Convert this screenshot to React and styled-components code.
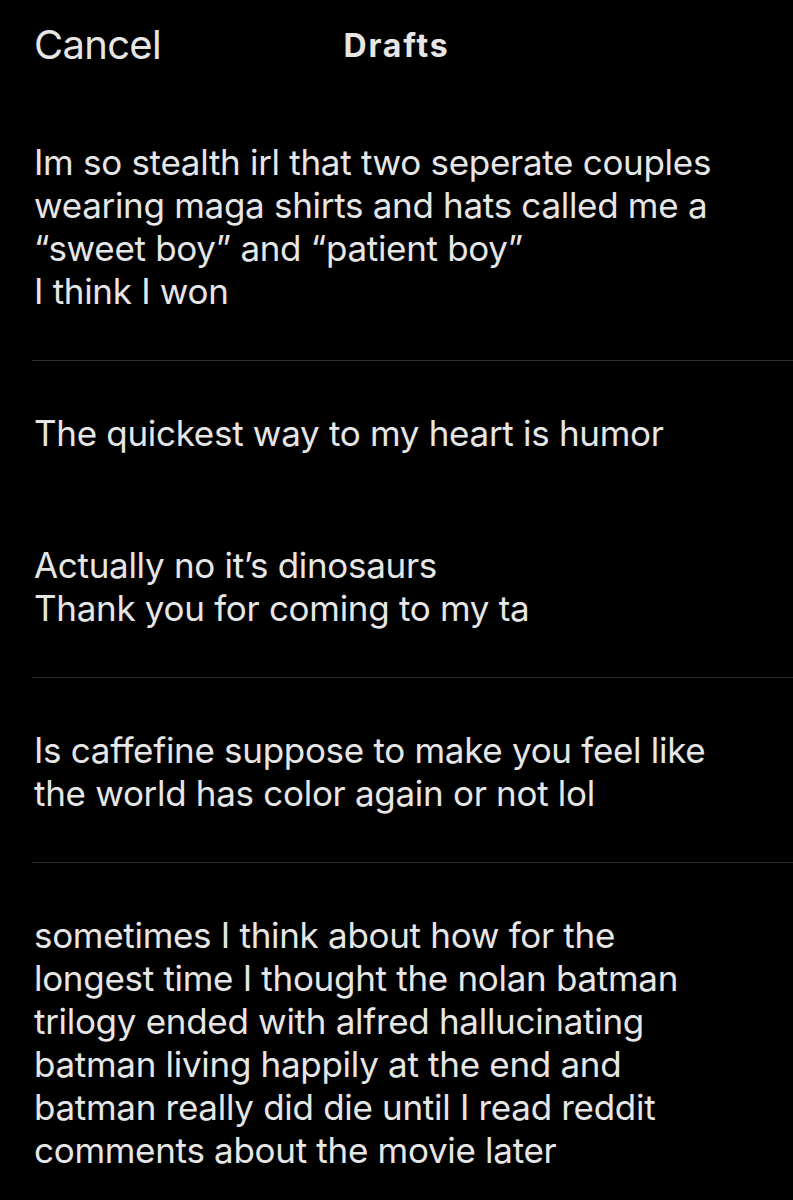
import React from 'react'
import styled, { createGlobalStyle } from 'styled-components'

const GlobalStyle = createGlobalStyle`
  html, body {
    margin: 0;
    padding: 0;
    background: #000;
  }
  body {
    font-family: Inter, "Noto Sans", "Liberation Sans", sans-serif;
    -webkit-font-smoothing: antialiased;
  }
`

const Screen = styled.div`
  width: 793px;
  min-height: 1200px;
  background: #000;
  color: #e6e6e6;
  overflow: hidden;
`

const Header = styled.header`
  height: 90px;
  display: grid;
  grid-template-columns: 1fr auto 1fr;
  align-items: center;
  padding: 0 34px;
`

const CancelButton = styled.button`
  justify-self: start;
  background: none;
  border: 0;
  padding: 0;
  margin-top: -2px;
  color: #e6e6e6;
  font-family: inherit;
  font-size: 40px;
  font-weight: 400;
  letter-spacing: -0.7px;
  cursor: pointer;
`

const Title = styled.h1`
  margin: 0;
  font-size: 32px;
  font-weight: 700;
  letter-spacing: 1.8px;
  color: #e6e6e6;
`

const List = styled.ul`
  list-style: none;
  margin: 0;
  padding: 0;
`

const Draft = styled.li`
  margin-left: 32px;
  padding: 51px 10px 47px 2px;
  border-bottom: ${p => (p.last ? '0' : '1px solid #2e2e2e')};
  font-size: 35px;
  line-height: 43px;
  letter-spacing: -0.3px;
`

const Para = styled.p`
  margin: 0;
  white-space: pre-line;

  & + & {
    margin-top: 89px;
  }
`

const drafts = [
  ['Im so stealth irl that two seperate couples\nwearing maga shirts and hats called me a\n\u201Csweet boy\u201D and \u201Cpatient boy\u201D\nI think I won'],
  ['The quickest way to my heart is humor', 'Actually no it\u2019s dinosaurs\nThank you for coming to my ta'],
  ['Is caffefine suppose to make you feel like\nthe world has color again or not lol'],
  ['sometimes I think about how for the\nlongest time I thought the nolan batman\ntrilogy ended with alfred hallucinating\nbatman living happily at the end and\nbatman really did die until I read reddit\ncomments about the movie later'],
]

const App = () => (
  <Screen>
    <GlobalStyle />
    <Header>
      <CancelButton>Cancel</CancelButton>
      <Title>Drafts</Title>
      <span />
    </Header>
    <List>
      {drafts.map((paras, i) => (
        <Draft key={i} last={i === drafts.length - 1}>
          {paras.map((text, j) => (
            <Para key={j}>{text}</Para>
          ))}
        </Draft>
      ))}
    </List>
  </Screen>
)

export default App
